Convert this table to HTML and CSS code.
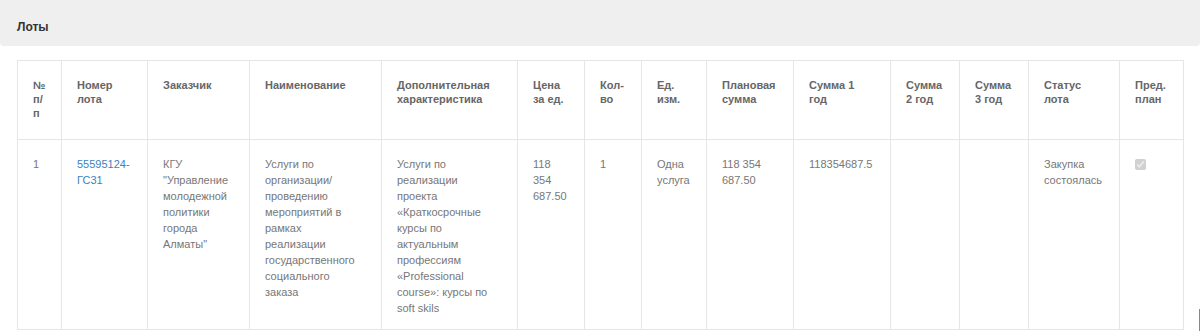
FILE: index.html
```html
<!DOCTYPE html>
<html lang="ru">
<head>
<meta charset="utf-8">
<title>Лоты</title>
<link rel="stylesheet" href="styles.css">
</head>
<body>
<div class="page">
  <div class="panel-heading">Лоты</div>
  <div class="panel-body">
    <table class="lots">
      <colgroup>
        <col style="width:44px"><col style="width:86px"><col style="width:102px"><col style="width:132px">
        <col style="width:136px"><col style="width:67px"><col style="width:57px"><col style="width:65px">
        <col style="width:87px"><col style="width:97px"><col style="width:69px"><col style="width:69px">
        <col style="width:91px"><col style="width:64px">
      </colgroup>
      <thead>
        <tr>
          <th>№ п/п</th>
          <th>Номер лота</th>
          <th>Заказчик</th>
          <th>Наименование</th>
          <th>Дополнительная характеристика</th>
          <th>Цена за ед.</th>
          <th>Кол-во</th>
          <th>Ед. изм.</th>
          <th>Плановая сумма</th>
          <th>Сумма 1 год</th>
          <th>Сумма 2 год</th>
          <th>Сумма 3 год</th>
          <th>Статус лота</th>
          <th>Пред. план</th>
        </tr>
      </thead>
      <tbody>
        <tr>
          <td>1</td>
          <td><a class="lot-link" href="#">55595124-ГС31</a></td>
          <td>КГУ "Управление молодежной политики города Алматы"</td>
          <td>Услуги по организации/ проведению мероприятий в рамках реализации государственного социального заказа</td>
          <td>Услуги по реализации проекта «Краткосрочные курсы по актуальным профессиям «Professional course»: курсы по soft skils</td>
          <td>118 354 687.50</td>
          <td>1</td>
          <td>Одна услуга</td>
          <td>118 354 687.50</td>
          <td>118354687.5</td>
          <td></td>
          <td></td>
          <td>Закупка состоялась</td>
          <td><input class="plan-check" type="checkbox" checked disabled></td>
        </tr>
      </tbody>
    </table>
  </div>
  <div class="scroll-mark"></div>
</div>
</body>
</html>
```

FILE: styles.css
```css
html, body {
  margin: 0;
  padding: 0;
  background: #fff;
}
body {
  font-family: "Liberation Sans", Arial, sans-serif;
  font-size: 11px;
  color: #777;
}
.page {
  position: relative;
  width: 1200px;
  height: 331px;
  overflow: hidden;
}
.panel-heading {
  height: 46px;
  box-sizing: border-box;
  padding: 20px 16px 0 17px;
  background: #efefef;
  border-radius: 0 0 4px 4px;
  font-weight: bold;
  font-size: 12px;
  line-height: 14px;
  color: #333;
}
.panel-body {
  padding: 14px 17px 0 17px;
}
.lots {
  table-layout: fixed;
  width: 1166px;
  border-collapse: collapse;
  border: 1px solid #e6e6e6;
}
.lots th, .lots td {
  border: 1px solid #e6e6e6;
  padding: 16px 17px 13px 15px;
  text-align: left;
  vertical-align: top;
}
.lots th {
  font-weight: bold;
  color: #666;
  line-height: 14px;
  padding-top: 17px;
  padding-bottom: 19px;
}
.lots td {
  line-height: 16px;
}
.lot-link {
  color: #3d7fbd;
  text-decoration: none;
}
.plan-check {
  margin: 3px 0 0 0;
  width: 11px;
  height: 11px;
}
.scroll-mark {
  position: absolute;
  right: 0;
  bottom: 0;
  width: 1px;
  height: 22px;
  background: #888;
}
```
